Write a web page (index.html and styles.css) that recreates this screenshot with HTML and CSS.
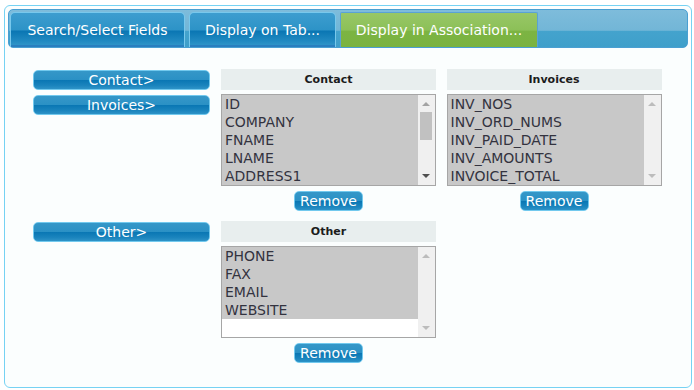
FILE: index.html
```html
<!DOCTYPE html>
<html>
<head>
<meta charset="utf-8">
<link rel="stylesheet" href="styles.css">
</head>
<body>
<div class="frame">
  <div class="tabbar">
    <div class="tab tab-1">Search/Select Fields</div>
    <div class="tab tab-2">Display on Tab...</div>
    <div class="tab tab-3 active">Display in Association...</div>
  </div>
  <div class="content">
    <div class="leftcol">
      <div class="btn side">Contact&gt;</div>
      <div class="btn side">Invoices&gt;</div>
    </div>
    <div class="panel">
      <div class="phead">Contact</div>
      <div class="list">
        <div class="items">
          <div class="item">ID</div>
          <div class="item">COMPANY</div>
          <div class="item">FNAME</div>
          <div class="item">LNAME</div>
          <div class="item">ADDRESS1</div>
        </div>
        <div class="sbar">
          <span class="arr up"></span>
          <span class="thumb"></span>
          <span class="arr down"></span>
        </div>
      </div>
      <div class="btn remove">Remove</div>
    </div>
    <div class="panel">
      <div class="phead">Invoices</div>
      <div class="list">
        <div class="items">
          <div class="item">INV_NOS</div>
          <div class="item">INV_ORD_NUMS</div>
          <div class="item">INV_PAID_DATE</div>
          <div class="item">INV_AMOUNTS</div>
          <div class="item">INVOICE_TOTAL</div>
        </div>
        <div class="sbar">
          <span class="arr up light"></span>
          <span class="arr down light"></span>
        </div>
      </div>
      <div class="btn remove">Remove</div>
    </div>
    <div class="leftcol">
      <div class="btn side">Other&gt;</div>
    </div>
    <div class="panel">
      <div class="phead">Other</div>
      <div class="list">
        <div class="items">
          <div class="item">PHONE</div>
          <div class="item">FAX</div>
          <div class="item">EMAIL</div>
          <div class="item">WEBSITE</div>
        </div>
        <div class="sbar">
          <span class="arr up light"></span>
          <span class="arr down light"></span>
        </div>
      </div>
      <div class="btn remove">Remove</div>
    </div>
  </div>
</div>
</body>
</html>
```
FILE: styles.css
```css
* { box-sizing: border-box; }
html, body { margin: 0; padding: 0; background: #ffffff; }
body { font-family: "DejaVu Sans", Verdana, sans-serif; }

.frame {
  margin: 5px 0 0 4px;
  width: 688px;
  height: 383px;
  border: 1px solid #76d2f3;
  border-radius: 6px;
  background: #fbfefe;
  padding: 3px 3px 0 3px;
}

.tabbar {
  height: 39px;
  border: 1px solid #4a9fd2;
  border-radius: 5px;
  background: linear-gradient(#7ebcdb 0%, #72b6d7 55%, #44a3cd 57%, #3f9fca 100%);
  padding: 3px 0 0 1px;
  display: flex;
  align-items: flex-end;
  gap: 4px;
}

.tab {
  height: 35px;
  border: 1px solid #78c8ec;
  border-bottom: none;
  border-radius: 5px 5px 0 0;
  color: #ffffff;
  font-size: 14px;
  display: flex;
  align-items: center;
  justify-content: center;
  background: linear-gradient(#3d9dcf 0%, #2d93c7 50%, #0a76b3 53%, #1f88c0 80%, #3598cb 100%);
  box-shadow: inset 0 -2px 0 #2a7fbf;
}
.tab-1 { width: 175px; }
.tab-2 { width: 147px; }
.tab-3 { width: 198px; }
.tab.active {
  background: linear-gradient(#98c766 0%, #8cc058 50%, #7cb443 54%, #7ab340 100%);
  border-color: #5aa2d4;
  border-radius: 2px 2px 0 0;
  box-shadow: none;
}

.content {
  display: grid;
  grid-template-columns: 177px 215px 215px;
  column-gap: 11px;
  row-gap: 10px;
  padding: 21px 0 0 25px;
}
.content > .panel:nth-child(3) { margin-left: -1px; }

.leftcol { display: flex; flex-direction: column; gap: 5px; padding-top: 1px; }

.btn {
  color: #ffffff;
  font-size: 14px;
  height: 20px;
  line-height: 18px;
  text-align: center;
  border: 1px solid #72c9ee;
  border-radius: 5px;
  background: linear-gradient(#3597c8 0%, #2b91c5 48%, #0a77b4 52%, #1a84bd 80%, #2e93c7 100%);
}
.side { width: 177px; }

.panel { display: flex; flex-direction: column; align-items: center; }

.phead {
  width: 215px;
  height: 21px;
  background: #e8eeee;
  font-size: 11px;
  font-weight: bold;
  color: #1c1c1c;
  text-align: center;
  line-height: 21px;
}

.list {
  margin-top: 4px;
  width: 215px;
  height: 92px;
  border: 1px solid #a6a6a6;
  background: #ffffff;
  display: flex;
}
.items { flex: 1; padding-top: 0; }
.item {
  background: #c8c8c8;
  color: #33333f;
  font-size: 14px;
  height: 18px;
  line-height: 18px;
  padding-left: 3px;
  white-space: nowrap;
}

.sbar {
  width: 17px;
  background: #f0f0f0;
  position: relative;
}
.arr {
  position: absolute;
  left: 4px;
  width: 0; height: 0;
  border-left: 4px solid transparent;
  border-right: 4px solid transparent;
}
.arr.up { top: 7px; border-bottom: 4px solid #a3a3a3; }
.arr.down { bottom: 7px; border-top: 4px solid #505050; }
.arr.up.light { border-bottom-color: #bcbcbc; }
.arr.down.light { border-top-color: #bcbcbc; }
.thumb {
  position: absolute;
  left: 2px;
  top: 17px;
  width: 12px;
  height: 28px;
  background: #c1c1c1;
}

.remove {
  margin-top: 5px;
  width: 69px;
}
```
